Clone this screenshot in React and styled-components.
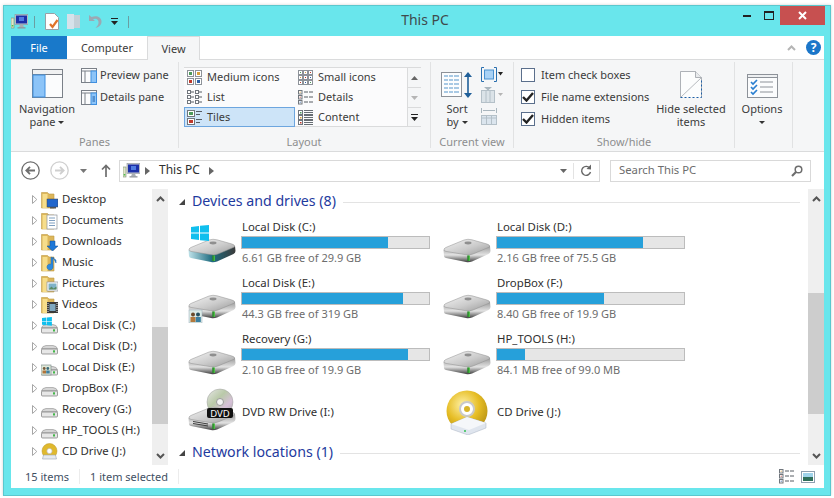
import styled, { createGlobalStyle } from "styled-components";

const GlobalStyle = createGlobalStyle`
  html, body {
    margin: 0;
    background: #ffffff;
    overflow: hidden;
  }
  body {
    font-family: "Noto Sans", "Open Sans", sans-serif;
    font-size: 11px;
    color: #3b3b3b;
  }
  * { box-sizing: border-box; }
  svg { display: block; flex: none; }
`;

const Window = styled.div`
  margin: 5px 3px 0;
  width: 828px;
  height: 491px;
  padding: 0 6px 7px 7px;
  display: flex;
  flex-direction: column;
  background: #69e6ec;
  border: 1px solid #5ac8ce;
  box-shadow: 0 0 3px rgba(0, 0, 0, 0.18);
`;

const TitleBar = styled.div`
  height: 30px;
  flex: none;
  display: grid;
  grid-template-columns: 1fr auto 1fr;
`;

const QuickAccess = styled.div`
  display: flex;
  align-items: center;
  padding-top: 1px;
`;

const QuickSep = styled.span`
  width: 1px;
  height: 12px;
  background: #6a9ea2;
  margin: 0 ${(p) => p.$after || 10}px 0 ${(p) => p.$before || 6}px;
`;

const Title = styled.div`
  font-size: 14px;
  line-height: 28px;
  padding-left: 15px;
  color: #3f4a4c;
`;

const Caption = styled.div`
  display: flex;
  justify-content: flex-end;
  align-items: flex-start;
  margin-right: -1px;
`;

const CaptionButton = styled.div`
  width: ${(p) => p.$w}px;
  height: 19px;
  display: flex;
  align-items: center;
  justify-content: center;
  background: ${(p) => (p.$close ? "#c75050" : "transparent")};
`;

const TabRow = styled.div`
  height: 24px;
  flex: none;
  display: flex;
  background: #ffffff;
  border-bottom: 1px solid #dadbdc;
`;

const Tab = styled.div`
  width: ${(p) => p.$w}px;
  height: ${(p) => (p.$active ? 24 : 23)}px;
  display: flex;
  align-items: center;
  justify-content: center;
  background: ${(p) => (p.$file ? "#1979ca" : p.$active ? "#f5f6f7" : "#ffffff")};
  color: ${(p) => (p.$file ? "#ffffff" : "#3b3b3b")};
  border: ${(p) => (p.$active ? "1px solid #dadbdc" : "none")};
  border-bottom: none;
`;

const TabTools = styled.div`
  margin-left: auto;
  display: flex;
  align-items: center;
  gap: 10px;
  padding-right: 3px;
`;

const Ribbon = styled.div`
  height: 92px;
  flex: none;
  display: flex;
  padding: 2px 0 3px;
  background: #f5f6f7;
  border-bottom: 1px solid #dadbdc;
`;

const Group = styled.div`
  width: ${(p) => p.$w}px;
  flex: none;
  display: flex;
  flex-direction: column;
  border-right: 1px solid #e1e2e3;
`;

const GroupBody = styled.div`
  flex: 1;
  display: flex;
  align-items: flex-start;
  padding-left: ${(p) => p.$left || 0}px;
`;

const GroupLabel = styled.div`
  height: 13px;
  line-height: 13px;
  text-align: center;
  color: #8d8e8f;
  margin-left: ${(p) => p.$shift || 0}px;
`;

const LargeButton = styled.div`
  width: ${(p) => p.$w}px;
  padding-top: 7px;
  margin-left: ${(p) => p.$ml || 0}px;
  display: flex;
  flex-direction: column;
  align-items: center;
  text-align: center;
  white-space: nowrap;
`;

const LargeIcon = styled.div`
  height: 29px;
  margin-bottom: 4px;
  display: flex;
  align-items: flex-end;
`;

const LargeLine = styled.div`
  height: 13px;
  line-height: 13px;
`;

const Caret = styled.span`
  display: inline-block;
  width: 0;
  height: 0;
  margin-left: ${(p) => p.$ml ?? 3}px;
  vertical-align: 2px;
  border-left: 3px solid transparent;
  border-right: 3px solid transparent;
  border-top: 3px solid #333;
`;

const SmallList = styled.div`
  padding-top: 2px;
  margin-left: ${(p) => p.$ml}px;
  width: ${(p) => (p.$w ? `${p.$w}px` : "auto")};
`;

const SmallRow = styled.div`
  height: 22px;
  display: flex;
  align-items: center;
  gap: ${(p) => p.$gap || 3}px;
  white-space: nowrap;
`;

/* Noto sits a pixel low in its line box, this lifts the label without moving the icon beside it */
const RowLabel = styled.span`
  margin-bottom: 2px;
`;

const CheckBox = styled.span`
  width: 14px;
  height: 14px;
  flex: none;
  display: flex;
  align-items: center;
  justify-content: center;
  background: #ffffff;
  border: 1px solid #5b6f8c;
`;

const Gallery = styled.div`
  margin: 5px 0 0 5px;
  width: 237px;
  height: 60px;
  display: grid;
  grid-template-columns: 111px 112px 14px;
  grid-template-rows: repeat(3, 20px);
  grid-auto-flow: column;
  background: #fbfbfc;
  box-shadow: inset 0 1px 0 #dadbdc, inset 0 -1px 0 #dadbdc;
`;

const GalleryItem = styled.div`
  display: flex;
  align-items: center;
  gap: 5px;
  white-space: nowrap;
  background: ${(p) => (p.$selected ? "#cde4f8" : "transparent")};
  border: ${(p) => (p.$selected ? "1px solid #6da6df" : "none")};
  padding-left: ${(p) => (p.$selected ? 2 : 3)}px;
`;

const GalleryStep = styled.div`
  display: flex;
  align-items: center;
  justify-content: center;
  background: #f5f6f7;
  border-left: 1px solid #dadbdc;
  border-top: 1px solid #dadbdc;
  &:last-child { border-bottom: 1px solid #dadbdc; }
`;

const ToolColumn = styled.div`
  display: flex;
  flex-direction: column;
  gap: 5px;
  margin: 5px 0 0 8px;
`;

const AddressRow = styled.div`
  height: 37px;
  flex: none;
  display: flex;
  align-items: center;
  padding: 0 13px 0 10px;
  background: #ffffff;
`;

const NavGap = styled.span`
  width: ${(p) => p.$w}px;
  flex: none;
`;

const AddressBox = styled.div`
  flex: 1;
  height: 22px;
  display: flex;
  align-items: center;
  padding-left: 3px;
  border: 1px solid #d9d9d9;
  color: #2f2f2f;
  font-size: 12px;
`;

const Crumb = styled.span`
  margin: 0 9px 2px;
`;

const AddressEnd = styled.div`
  margin-left: auto;
  height: 100%;
  display: flex;
  align-items: center;
  gap: 6px;
  padding-right: 7px;
`;

const AddressSep = styled.span`
  width: 1px;
  height: 16px;
  background: #e3e3e3;
`;

const SearchBox = styled.div`
  width: 201px;
  height: 22px;
  margin-left: 10px;
  display: flex;
  align-items: center;
  justify-content: space-between;
  padding: 0 7px 0 8px;
  border: 1px solid #d9d9d9;
  color: #6d6d6d;
  font-size: 11.3px;
`;

const Content = styled.div`
  flex: 1;
  min-height: 0;
  display: flex;
  background: #ffffff;
`;

const NavPane = styled.div`
  width: 141px;
  flex: none;
  overflow: hidden;
`;

const TreeRow = styled.div`
  height: 21px;
  display: flex;
  align-items: center;
  gap: 4px;
  padding-left: 21px;
  white-space: nowrap;
  color: #2f2f2f;
  font-size: 11.4px;
`;

const ScrollBar = styled.div`
  width: 16px;
  flex: none;
  display: flex;
  flex-direction: column;
  background: #efefef;
`;

const ScrollEnd = styled.div`
  height: 19px;
  flex: none;
  display: flex;
  align-items: center;
  justify-content: center;
`;

const ScrollTrack = styled.div`
  flex: 1;
  display: flex;
  flex-direction: column;
  justify-content: flex-start;
  padding-top: ${(p) => p.$top}px;
`;

const ScrollThumb = styled.div`
  height: ${(p) => p.$h}px;
  background: #cdcdcd;
`;

const MainPane = styled.div`
  flex: 1;
  min-width: 0;
  margin-left: 2px;
  padding: 0 8px 0 9px;
  overflow: hidden;
`;

const GroupHeader = styled.div`
  height: 24px;
  padding-top: 2px;
  display: flex;
  align-items: center;
`;

const HeaderText = styled.span`
  font-size: 14.2px;
  color: #1e3a9e;
  margin: 0 7px 4px 7px;
  white-space: nowrap;
`;

const HeaderRule = styled.span`
  flex: 1;
  height: 1px;
  background: #e3e3e3;
`;

const TileGrid = styled.div`
  display: grid;
  grid-template-columns: 255px 255px;
  grid-auto-rows: 48px;
  row-gap: 8px;
  margin: 6px 0 5px 9px;
`;

const Tile = styled.div`
  display: flex;
  align-items: ${(p) => (p.$bare ? "center" : "flex-start")};
  gap: 5px;
`;

const TileText = styled.div`
  width: 189px;
  color: #2f2f2f;
`;

const TileName = styled.div`
  padding-left: 1px;
  line-height: 15px;
  font-size: 11.4px;
`;

const UsageBar = styled.div`
  height: 13px;
  margin: 2px 0 1px;
  background: #e6e6e6;
  border: 1px solid #bcbcbc;
`;

const UsageFill = styled.div`
  height: 100%;
  background: #26a0da;
`;

const FreeText = styled.div`
  padding-left: 1px;
  line-height: 15px;
  color: #6d6d6d;
`;

const StatusBar = styled.div`
  height: 23px;
  flex: none;
  display: flex;
  align-items: center;
  padding: 0 9px 0 14px;
  background: #ffffff;
  color: #3f4f63;
`;

const StatusItem = styled.span`
  padding-right: ${(p) => p.$pr}px;
  margin-right: 10px;
  line-height: 15px;
  border-right: 1px solid #ececec;
`;

const StatusViews = styled.div`
  margin-left: auto;
  display: flex;
  align-items: center;
  gap: 7px;
`;

/* ---- drawings ---- */

const Computer = () => (
  <svg width="17" height="15" viewBox="0 0 17 15">
    <rect x="0" y="4" width="3" height="10" fill="#dfe6c8" stroke="#7a8a70" strokeWidth="0.6" />
    <rect x="0.7" y="11" width="1.6" height="1.5" fill="#4fbf4f" />
    <rect x="4" y="0.5" width="13" height="10" fill="#c9ccd1" stroke="#8d9299" strokeWidth="0.6" />
    <rect x="5" y="1.5" width="11" height="8" fill="#1c2fa8" />
    <rect x="8" y="3" width="5" height="4" fill="#4f7be0" />
    <path d="M9 10.5h3l1 3H8z" fill="#a8adb3" />
    <rect x="6.5" y="13.2" width="8" height="1.3" fill="#8f949a" />
  </svg>
);

const NavPaneIcon = ({ w = 31, h = 29, wide = 12 }) => (
  <svg width={w} height={h} viewBox={`0 0 ${w} ${h}`}>
    <rect x="0.5" y="0.5" width={w - 1} height={h - 1} fill="#fbfcfd" stroke="#7a8088" />
    <rect x="0.5" y="0.5" width={w - 1} height="5" fill="#f0f1f2" stroke="#7a8088" />
    <rect x="1" y="6" width={wide} height={h - 7} fill="#8cc4f8" stroke="#3f8fe0" />
  </svg>
);

const SidePane = ({ lines }) => (
  <svg width="16" height="15" viewBox="0 0 16 15">
    <rect x="0.5" y="0.5" width="15" height="14" fill="#fbfcfd" stroke="#7a8088" />
    <path d="M0.5 3h15M4 3v11.5" stroke="#7a8088" fill="none" />
    <rect x="10" y="3" width="5.5" height="11.5" fill="#8cc4f8" stroke="#3f8fe0" />
    {lines && <path d="M11.5 7h2.5M11.5 9h2.5M11.5 11h2.5" stroke="#1f5fa8" />}
  </svg>
);

const swatches = ["#4d9a5b", "#d9a13b", "#c0392b", "#2e5fa8"];

const ViewIcon = ({ kind }) => {
  const dash = "#565c63";
  if (kind === "medium") {
    return (
      <svg width="15" height="15" viewBox="0 0 15 15">
        {[[0, 0], [8, 0], [0, 8], [8, 8]].map(([x, y], i) => (
          <g key={i}>
            <rect x={x + 0.5} y={y + 0.5} width="6" height="6" fill="#fff" stroke="#8d9299" />
            <rect x={x + 2} y={y + 2} width="3" height="3" fill={swatches[i]} />
          </g>
        ))}
      </svg>
    );
  }
  if (kind === "small") {
    const cells = [];
    for (let r = 0; r < 3; r++) for (let c = 0; c < 3; c++) cells.push([c * 5, r * 5, swatches[(r + c) % 4]]);
    return (
      <svg width="15" height="15" viewBox="0 0 15 15">
        {cells.map(([x, y, f], i) => (
          <g key={i}>
            <rect x={x + 0.5} y={y + 0.5} width="4" height="4" fill="#fff" stroke="#8d9299" />
            <rect x={x + 2} y={y + 2} width="1" height="1" fill={f} />
          </g>
        ))}
      </svg>
    );
  }
  if (kind === "list") {
    return (
      <svg width="15" height="15" viewBox="0 0 15 15">
        {[0, 5, 10].map((y) => (
          <g key={y} fill="#fff" stroke="#70767d">
            <rect x="0.5" y={y + 0.5} width="3" height="3" />
            <rect x="8.5" y={y + 0.5} width="3" height="3" />
            <path d={`M4 ${y + 2}h3M12 ${y + 2}h3`} stroke={dash} />
          </g>
        ))}
      </svg>
    );
  }
  if (kind === "details") {
    return (
      <svg width="15" height="15" viewBox="0 0 15 15">
        {[0, 5, 10].map((y, i) => (
          <g key={y} fill="#fff" stroke="#70767d">
            <rect x="0.5" y={y + 0.5} width="3.5" height="3.5" />
            <rect x="1.7" y={y + 1.7} width="1" height="1" fill={swatches[i + 1]} stroke="none" />
            <path d={`M6 ${y + 2}h4M11 ${y + 2}h4`} stroke={dash} />
          </g>
        ))}
      </svg>
    );
  }
  if (kind === "tiles") {
    return (
      <svg width="15" height="15" viewBox="0 0 15 15">
        {[0, 8].map((y, i) => (
          <g key={y}>
            <rect x="0.5" y={y + 0.5} width="7" height="6" fill="#fff" stroke="#70767d" />
            <rect x="2" y={y + 2} width="4" height="3" fill={swatches[i * 2]} />
            <path d={`M9 ${y + 1.5}h6M9 ${y + 4.5}h4`} stroke={dash} />
          </g>
        ))}
      </svg>
    );
  }
  return (
    <svg width="15" height="15" viewBox="0 0 15 15">
      {[0, 5, 10].map((y, i) => (
        <g key={y}>
          <rect x="0.5" y={y + 0.5} width="4" height="4" fill="#fff" stroke="#70767d" />
          <rect x="2" y={y + 2} width="1.5" height="1.5" fill={swatches[i]} />
          <path d={`M6 ${y + 0.5}h9M6 ${y + 2.5}h9M6 ${y + 4.5}h9`} stroke={dash} strokeWidth="0.9" />
        </g>
      ))}
    </svg>
  );
};

const Arrow = ({ dir, color = "#5f6368", w = 9, h = 6 }) => {
  const points = dir === "up" ? `0,${h} ${w / 2},0 ${w},${h}` : `0,0 ${w / 2},${h} ${w},0`;
  return (
    <svg width={w} height={h} viewBox={`0 0 ${w} ${h}`}>
      <polygon points={points} fill={color} />
    </svg>
  );
};

const Chevron = ({ dir, color = "#555" }) => (
  <svg width="9" height="6" viewBox="0 0 9 6">
    <path d={dir === "up" ? "M1 5l3.5-3.5L8 5" : "M1 1l3.5 3.5L8 1"} fill="none" stroke={color} strokeWidth="2" />
  </svg>
);

const CrumbArrow = () => (
  <svg width="5" height="8" viewBox="0 0 5 8">
    <polygon points="0,0 5,4 0,8" fill="#666" />
  </svg>
);

const TreeArrow = () => (
  <svg width="5" height="9" viewBox="0 0 5 9">
    <polygon points="0.5,0.5 4.8,4.5 0.5,8.5" fill="#fff" stroke="#a6a6a6" />
  </svg>
);

const HeaderTriangle = () => (
  <svg width="6" height="6" viewBox="0 0 6 6">
    <polygon points="6,0 6,6 0,6" fill="#444" />
  </svg>
);

const CircleNav = ({ back, enabled }) => {
  const c = enabled ? "#6e6e6e" : "#cfcfcf";
  return (
    <svg width="19" height="19" viewBox="0 0 19 19">
      <circle cx="9.5" cy="9.5" r="8.7" fill="#fff" stroke={c} strokeWidth="1.3" />
      <path
        d={back ? "M14 9.5H5.5M9 5.8L5.3 9.5 9 13.2" : "M5 9.5h8.5M10 5.8l3.7 3.7-3.7 3.7"}
        fill="none"
        stroke={c}
        strokeWidth="1.8"
      />
    </svg>
  );
};

const overlays = {
  desktop: (
    <>
      <rect x="6" y="8" width="11" height="8" fill="#2266cc" stroke="#444" strokeWidth="0.5" />
      <rect x="9" y="16" width="6" height="1.5" fill="#555" />
    </>
  ),
  documents: (
    <>
      <rect x="6" y="3" width="10" height="14" fill="#fff" stroke="#8d9299" strokeWidth="0.7" />
      <path d="M8 6h6M8 8.5h6M8 11h6M8 13.5h6" stroke="#7f9fc0" />
    </>
  ),
  downloads: <path d="M9 8h5v5h3l-5.5 5L6 13h3z" fill="#1e78d8" stroke="#0e4c99" strokeWidth="0.5" />,
  music: (
    <path d="M12 3v10a3 3 0 1 1-2-2.8V3l5 3v3z" fill="#2c8ae0" stroke="#1460b0" strokeWidth="0.5" />
  ),
  pictures: (
    <>
      <rect x="6" y="7" width="11" height="9" fill="#fff" stroke="#8d9299" strokeWidth="0.7" />
      <rect x="7.5" y="8.5" width="8" height="6" fill="#7fb2c8" />
      <path d="M7.5 14.5l3-3 2 2 3-2v3z" fill="#5a8a64" />
    </>
  ),
  videos: (
    <>
      <rect x="6" y="6" width="11" height="11" fill="#3a3a3a" />
      <rect x="8.5" y="8" width="6" height="7" fill="#7fa8c0" />
      <path d="M7 7v9M16 7v9" stroke="#ddd" strokeDasharray="1 1" />
    </>
  ),
};

const FolderIcon = ({ kind }) => (
  <svg width="17" height="18" viewBox="0 0 17 18">
    <path d="M0.5 1.5h6l1.5 1.5h5v14h-12.5z" fill="#dcb65a" stroke="#c19c45" strokeWidth="0.6" />
    <rect x="1.5" y="3" width="5" height="14" fill="#f6dd8b" />
    {overlays[kind]}
  </svg>
);

const WindowsLogo = ({ x, y, s }) => (
  <g transform={`translate(${x} ${y}) scale(${s})`} fill="#10bfee">
    <polygon points="0,2 8,1 8,7.6 0,7.6" />
    <polygon points="9,0.8 18,0 18,7.6 9,7.6" />
    <polygon points="0,8.6 8,8.6 8,15 0,14" />
    <polygon points="9,8.6 18,8.6 18,16 9,15.2" />
  </g>
);

const SmallDrive = ({ logo, share }) => (
  <svg width="17" height="18" viewBox="0 0 17 18">
    <path d="M0.5 11 Q1 8 5 7.5h7 Q16 8 16.5 11z" fill="#d5d5d5" stroke="#8f8f8f" strokeWidth="0.6" />
    <rect x="0.5" y="11" width="16" height="5" rx="1" fill="#e7e7e7" stroke="#777" strokeWidth="0.7" />
    <rect x="12" y="12.3" width="2" height="2.2" fill="#43b649" />
    {logo && <WindowsLogo x={1} y={0} s={0.55} />}
    {share && (
      <>
        <rect x="0" y="6" width="10" height="10" fill="#dfe8d8" stroke="#7f8f8f" strokeWidth="0.7" />
        <circle cx="3.2" cy="9.5" r="1.4" fill="#7a5a3a" />
        <circle cx="6.8" cy="9.5" r="1.4" fill="#3a6a7a" />
        <rect x="1.5" y="11.5" width="3.5" height="3" fill="#b0743a" />
        <rect x="5.2" y="11.5" width="3.5" height="3" fill="#3f7f9f" />
      </>
    )}
  </svg>
);

const CdSmall = () => (
  <svg width="17" height="18" viewBox="0 0 17 18">
    <circle cx="8.5" cy="8" r="7.5" fill="#e0b92e" stroke="#b89420" strokeWidth="0.5" />
    <circle cx="8.5" cy="8" r="2.6" fill="#fff" stroke="#bbb" strokeWidth="0.7" />
    <path d="M2.5 12h12l1 4h-14z" fill="#e6eaf0" stroke="#9aa5b4" strokeWidth="0.6" />
  </svg>
);

const DriveBody = ({ dvd, dark }) => (
  <g transform="translate(0 20)">
    <path
      d="M0.5 11 L1 17 Q1 18.5 3 19 L23 23 Q26 23.6 29 22.5 L45.5 15 Q47.5 14 47.5 12 L47 7z"
      fill={`url(#${dark ? "driveFrontC" : "driveFront"})`}
    />
    <path
      d="M1 10 Q1.5 9 4 8 L21 1 Q25 -0.4 29 0.8 L44 5 Q47.5 6 46.5 8 L30 15 Q26.5 16.5 22 15.6 L3 12.4 Q0.5 12 1 10z"
      fill="url(#driveTop)"
      stroke="#8e8e8e"
      strokeWidth="0.5"
    />
    <ellipse cx="25" cy="4" rx="3.5" ry="1.4" fill="#8f8f8f" />
    {dvd && <path d="M5 14.5L20 17M5 16.5L20 19" stroke="#3d3d3d" strokeWidth="1" />}
    <rect x="24.5" y="16.5" width="2.4" height="5.5" fill="#47c43f" />
    <rect x="24.5" y="16.5" width="1" height="5.5" fill="#1e6a24" />
  </g>
);

const DriveDefs = () => (
  <defs>
    <linearGradient id="driveTop" x1="0" y1="0" x2="1" y2="1">
      <stop offset="0" stopColor="#f4f4f4" />
      <stop offset="0.55" stopColor="#cbcbcb" />
      <stop offset="1" stopColor="#9a9a9a" />
    </linearGradient>
    <linearGradient id="driveFront" x1="0" y1="0" x2="0" y2="1">
      <stop offset="0" stopColor="#9a9a9a" />
      <stop offset="0.55" stopColor="#e2e2e2" />
      <stop offset="1" stopColor="#3f3f3f" />
    </linearGradient>
    <linearGradient id="driveFrontC" x1="0" y1="0" x2="1" y2="0">
      <stop offset="0" stopColor="#bfe3ea" />
      <stop offset="0.5" stopColor="#1f6c80" />
      <stop offset="1" stopColor="#3a3a3a" />
    </linearGradient>
    <radialGradient id="discGold" cx="0.4" cy="0.35" r="0.8">
      <stop offset="0" stopColor="#fff2a8" />
      <stop offset="0.5" stopColor="#e6bd25" />
      <stop offset="1" stopColor="#a88410" />
    </radialGradient>
    <linearGradient id="discSilver" x1="0" y1="0" x2="1" y2="1">
      <stop offset="0" stopColor="#e8e8e8" />
      <stop offset="0.4" stopColor="#b9c9a8" />
      <stop offset="0.7" stopColor="#d6c0d8" />
      <stop offset="1" stopColor="#a9a9a9" />
    </linearGradient>
  </defs>
);

const DriveIcon = ({ kind }) => (
  <svg width="48" height="48" viewBox="0 0 48 48">
    <DriveDefs />
    {kind === "cd" ? (
      <>
        <circle cx="24" cy="24" r="20.5" fill="url(#discGold)" />
        <circle cx="24" cy="22" r="7" fill="#ffffff" stroke="#c9c9c9" strokeWidth="2" />
        <circle cx="24" cy="22" r="3" fill="#d8b52a" />
        <path d="M8 37 L24 30 L43 36 L43 41 L25 48 L8 42z" fill="#dfe5ee" stroke="#a9b3c2" strokeWidth="0.5" />
        <path d="M8 37 L24 30 L43 36 L26 43z" fill="#f5f7fa" />
        <circle cx="22" cy="44" r="1" fill="#2fbf4f" />
      </>
    ) : (
      <>
        {kind === "dvd" && (
          <>
            <circle cx="32" cy="15" r="13" fill="url(#discSilver)" stroke="#a0a0a0" strokeWidth="0.5" />
            <circle cx="32" cy="15" r="3.5" fill="#f3f3f3" stroke="#999" />
          </>
        )}
        <DriveBody dvd={kind === "dvd"} dark={kind === "windows"} />
        {kind === "windows" && <WindowsLogo x={3} y={6} s={1} />}
        {kind === "dvd" && (
          <>
            <rect x="19" y="21" width="26" height="10" rx="2" fill="#111" />
            <text x="32" y="29.5" textAnchor="middle" fontSize="9.5" fill="#fff" fontFamily="Noto Sans, sans-serif">
              DVD
            </text>
          </>
        )}
        {kind === "share" && (
          <>
            <rect x="1" y="35" width="13" height="13" fill="#dcebe6" stroke="#9ab" strokeWidth="0.5" />
            <circle cx="5" cy="39.5" r="2" fill="#6a4a2a" />
            <circle cx="10" cy="39.5" r="2" fill="#24505f" />
            <rect x="2.5" y="42" width="5" height="5" fill="#b2793d" />
            <rect x="7.8" y="42" width="5" height="5" fill="#3a7f9f" />
          </>
        )}
      </>
    )}
  </svg>
);

const DocCheckIcon = () => (
  <svg width="15" height="17" viewBox="0 0 15 17">
    <path d="M0.5 0.5h9l4 4v12h-13z" fill="#fff" stroke="#9aa0a6" />
    <path d="M5 11l2.5 3 5-7" fill="none" stroke="#e0742a" strokeWidth="2.2" />
  </svg>
);

const PanesFaded = () => (
  <svg width="13" height="15" viewBox="0 0 13 15">
    <rect x="0" y="0" width="7" height="15" fill="#d6e2ea" />
    <rect x="7" y="1" width="6" height="13" fill="#c3d0d8" />
  </svg>
);

const UndoIcon = () => (
  <svg width="14" height="15" viewBox="0 0 14 15">
    <path d="M1 1v6h6L5 5.2C8 3.6 11 5.5 10.5 9 10.2 11 9 12.5 7.5 14 11.5 13 13.8 10.5 13.5 7 13 2.5 8 1 3.5 3z" fill="#9ba9b3" />
  </svg>
);

const DropLine = () => (
  <svg width="7" height="7" viewBox="0 0 7 7">
    <rect x="0" y="0" width="7" height="1" fill="#222" />
    <polygon points="0,3 7,3 3.5,7" fill="#222" />
  </svg>
);

const SortIcon = () => (
  <svg width="32" height="27" viewBox="0 0 32 27">
    <rect x="0.5" y="1.5" width="20" height="24" fill="#fcfdfe" stroke="#8d9299" />
    {[5, 9, 13, 17, 21].map((y) => (
      <path key={y} d={`M3 ${y}h4M8 ${y}h4M13 ${y}h5`} stroke="#8cb8dc" strokeWidth="1.4" />
    ))}
    <path d="M27 3v21" stroke="#1f5f99" strokeWidth="1.6" />
    <polygon points="23,6 27,1 31,6" fill="#1f5f99" />
    <polygon points="23,22 27,27 31,22" fill="#1f5f99" />
  </svg>
);

const GroupByIcon = () => (
  <svg width="22" height="15" viewBox="0 0 22 15">
    <path d="M3 0.5H0.5v14H3M13 0.5h2.5v14H13" fill="none" stroke="#2a6fae" />
    <rect x="3.5" y="3" width="9" height="9" fill="#a9d2f5" stroke="#4b92d0" />
    <polygon points="17,5 22,5 19.5,8.5" fill="#222" />
  </svg>
);

const AddColumnsIcon = () => (
  <svg width="22" height="16" viewBox="0 0 22 16">
    <rect x="0.5" y="3.5" width="13" height="12" fill="#dbe3e8" stroke="#b4c0c8" />
    <path d="M5 3.5v12M9 3.5v12" stroke="#b4c0c8" />
    <polygon points="3,0 11,0 7,3.5" fill="#a9b6be" />
    <polygon points="17,6 22,6 19.5,9" fill="#b5b5b5" />
  </svg>
);

const FitColumnsIcon = () => (
  <svg width="16" height="17" viewBox="0 0 16 17">
    <path d="M0.5 0v5M15.5 0v5M2 2.5h12" stroke="#a9b6be" />
    <rect x="0.5" y="7.5" width="15" height="9" fill="#dbe5ee" stroke="#b4c0c8" />
    <path d="M0.5 10h15M5.5 7.5v9M10.5 7.5v9" stroke="#b4c0c8" />
  </svg>
);

const HideIcon = () => (
  <svg width="22" height="27" viewBox="0 0 22 27">
    <path d="M0.5 26.5V0.5h15l6 6v20" fill="#fcfdfd" stroke="#9aa0a6" strokeWidth="0.8" />
    <path d="M15.5 0.5v6h6" fill="#e8eaec" stroke="#9aa0a6" strokeWidth="0.8" />
    <path d="M1 26L21 7" stroke="#b7bbbf" />
    <path d="M0.5 26.5h21V8" fill="none" stroke="#1d5fa6" strokeDasharray="2 2" />
  </svg>
);

const OptionsIcon = () => (
  <svg width="31" height="24" viewBox="0 0 31 24">
    <rect x="0.5" y="0.5" width="30" height="23" fill="#fbfcfd" stroke="#8d9299" />
    <rect x="0.5" y="0.5" width="30" height="3" fill="#eef0f2" stroke="#8d9299" />
    {[6, 11, 16].map((y) => (
      <g key={y}>
        <path d={`M4 ${y + 2}l2 2 4-4`} fill="none" stroke="#2a7fd0" strokeWidth="1.7" />
        <path d={`M13 ${y + 2}h13`} stroke="#8d9299" />
      </g>
    ))}
  </svg>
);

const CheckMark = () => (
  <svg width="12" height="10" viewBox="0 0 12 10">
    <path d="M1 5l3.5 3.5L11 1" fill="none" stroke="#222" strokeWidth="2.4" />
  </svg>
);

const RefreshIcon = () => (
  <svg width="12" height="13" viewBox="0 0 12 13">
    <path d="M10 4.5A4.5 4.5 0 1 0 10.5 8" fill="none" stroke="#666" strokeWidth="1.4" />
    <polygon points="11,0.5 11,5.5 6.5,5" fill="#666" />
  </svg>
);

const SearchIcon = () => (
  <svg width="12" height="12" viewBox="0 0 12 12">
    <circle cx="7.5" cy="4.5" r="3.3" fill="none" stroke="#6d6d6d" strokeWidth="1.5" />
    <path d="M5 7L1 11" stroke="#6d6d6d" strokeWidth="2.2" />
  </svg>
);

const UpArrow = () => (
  <svg width="10" height="13" viewBox="0 0 10 13">
    <path d="M5 13V2M1 5.5L5 1.5l4 4" fill="none" stroke="#6e6e6e" strokeWidth="1.7" />
  </svg>
);

const HelpIcon = () => (
  <svg width="15" height="15" viewBox="0 0 15 15">
    <circle cx="7.5" cy="7.5" r="7.5" fill="#1b76c9" />
    <text x="7.5" y="12" textAnchor="middle" fontSize="12" fontWeight="700" fill="#fff" fontFamily="Noto Sans, sans-serif">
      ?
    </text>
  </svg>
);

const LargeThumbView = () => (
  <svg width="14" height="12" viewBox="0 0 14 12">
    <rect x="0.5" y="0.5" width="13" height="11" fill="#fff" stroke="#8fa0b0" />
    <rect x="2" y="2" width="10" height="4" fill="#9fd3ea" />
    <rect x="2" y="6" width="10" height="4" fill="#2f6f5a" />
  </svg>
);

/* ---- data ---- */

const folders = [
  ["Desktop", "desktop"],
  ["Documents", "documents"],
  ["Downloads", "downloads"],
  ["Music", "music"],
  ["Pictures", "pictures"],
  ["Videos", "videos"],
];

const treeDrives = [
  ["Local Disk (C:)", <SmallDrive logo />],
  ["Local Disk (D:)", <SmallDrive />],
  ["Local Disk (E:)", <SmallDrive share />],
  ["DropBox (F:)", <SmallDrive />],
  ["Recovery (G:)", <SmallDrive />],
  ["HP_TOOLS (H:)", <SmallDrive />],
  ["CD Drive (J:)", <CdSmall />],
];

const drives = [
  { name: "Local Disk (C:)", free: "6.61 GB free of 29.9 GB", used: 78, kind: "windows" },
  { name: "Local Disk (D:)", free: "2.16 GB free of 75.5 GB", used: 78, kind: "plain" },
  { name: "Local Disk (E:)", free: "44.3 GB free of 319 GB", used: 86, kind: "share" },
  { name: "DropBox (F:)", free: "8.40 GB free of 19.9 GB", used: 57, kind: "plain" },
  { name: "Recovery (G:)", free: "2.10 GB free of 19.9 GB", used: 89, kind: "plain" },
  { name: "HP_TOOLS (H:)", free: "84.1 MB free of 99.0 MB", used: 15, kind: "plain" },
  { name: "DVD RW Drive (I:)", kind: "dvd" },
  { name: "CD Drive (J:)", kind: "cd" },
];

const layouts = [
  ["Medium icons", "medium"],
  ["List", "list"],
  ["Tiles", "tiles", true],
  ["Small icons", "small"],
  ["Details", "details"],
  ["Content", "content"],
];

export default function App() {
  return (
    <>
      <GlobalStyle />
      <Window>
        <TitleBar>
          <QuickAccess>
            <Computer />
            <QuickSep />
            <DocCheckIcon />
            <NavGap $w={7} />
            <PanesFaded />
            <NavGap $w={8} />
            <UndoIcon />
            <NavGap $w={9} />
            <DropLine />
            <QuickSep $before={10} />
          </QuickAccess>
          <Title>This PC</Title>
          <Caption>
            <CaptionButton $w={22}>
              <svg width="8" height="2" viewBox="0 0 8 2">
                <rect width="8" height="2" fill="#222" />
              </svg>
            </CaptionButton>
            <CaptionButton $w={22}>
              <svg width="10" height="9" viewBox="0 0 10 9">
                <rect x="0.5" y="0.5" width="9" height="8" fill="none" stroke="#222" />
                <rect x="0.5" y="0.5" width="9" height="1.5" fill="#222" />
              </svg>
            </CaptionButton>
            <CaptionButton $w={45} $close>
              <svg width="9" height="9" viewBox="0 0 9 9">
                <path d="M1 1l7 7M8 1l-7 7" stroke="#fff" strokeWidth="2" />
              </svg>
            </CaptionButton>
          </Caption>
        </TitleBar>

        <TabRow>
          <Tab $w={56} $file>File</Tab>
          <Tab $w={80}>Computer</Tab>
          <Tab $w={53} $active>View</Tab>
          <TabTools>
            <Chevron dir="up" color="#b5b5b5" />
            <HelpIcon />
          </TabTools>
        </TabRow>

        <Ribbon>
          <Group $w={168}>
            <GroupBody $left={8}>
              <LargeButton $w={56}>
                <LargeIcon>
                  <NavPaneIcon />
                </LargeIcon>
                <LargeLine>Navigation</LargeLine>
                <LargeLine>pane<Caret /></LargeLine>
              </LargeButton>
              <SmallList $ml={6}>
                <SmallRow><SidePane /><RowLabel>Preview pane</RowLabel></SmallRow>
                <SmallRow><SidePane lines /><RowLabel>Details pane</RowLabel></SmallRow>
              </SmallList>
            </GroupBody>
            <GroupLabel>Panes</GroupLabel>
          </Group>

          <Group $w={252}>
            <GroupBody>
              <Gallery>
                {layouts.map(([label, kind, selected]) => (
                  <GalleryItem key={label} $selected={selected}>
                    <ViewIcon kind={kind} />
                    <RowLabel>{label}</RowLabel>
                  </GalleryItem>
                ))}
                <GalleryStep><Arrow dir="up" color="#666" w={7} h={4} /></GalleryStep>
                <GalleryStep><Arrow dir="down" color="#b5b5b5" w={7} h={4} /></GalleryStep>
                <GalleryStep><DropLine /></GalleryStep>
              </Gallery>
            </GroupBody>
            <GroupLabel $shift={-1}>Layout</GroupLabel>
          </Group>

          <Group $w={83}>
            <GroupBody>
              <LargeButton $w={32} $ml={10}>
                <LargeIcon>
                  <SortIcon />
                </LargeIcon>
                <LargeLine>Sort</LargeLine>
                <LargeLine>by<Caret /></LargeLine>
              </LargeButton>
              <ToolColumn>
                <GroupByIcon />
                <AddColumnsIcon />
                <FitColumnsIcon />
              </ToolColumn>
            </GroupBody>
            <GroupLabel>Current view</GroupLabel>
          </Group>

          <Group $w={221}>
            <GroupBody $left={7}>
              <SmallList $ml={0} $w={130}>
                <SmallRow $gap={6}><CheckBox /><RowLabel>Item check boxes</RowLabel></SmallRow>
                <SmallRow $gap={6}><CheckBox><CheckMark /></CheckBox><RowLabel>File name extensions</RowLabel></SmallRow>
                <SmallRow $gap={6}><CheckBox><CheckMark /></CheckBox><RowLabel>Hidden items</RowLabel></SmallRow>
              </SmallList>
              <LargeButton $w={80}>
                <LargeIcon>
                  <HideIcon />
                </LargeIcon>
                <LargeLine>Hide selected</LargeLine>
                <LargeLine>items</LargeLine>
              </LargeButton>
            </GroupBody>
            <GroupLabel>Show/hide</GroupLabel>
          </Group>

          <Group $w={58}>
            <GroupBody $left={5}>
              <LargeButton $w={44}>
                <LargeIcon>
                  <OptionsIcon />
                </LargeIcon>
                <LargeLine>Options</LargeLine>
                <LargeLine><Caret $ml={0} /></LargeLine>
              </LargeButton>
            </GroupBody>
            <GroupLabel>&nbsp;</GroupLabel>
          </Group>
        </Ribbon>

        <AddressRow>
          <CircleNav back enabled />
          <NavGap $w={10} />
          <CircleNav />
          <NavGap $w={11} />
          <Arrow dir="down" color="#777" w={7} h={4} />
          <NavGap $w={14} />
          <UpArrow />
          <NavGap $w={8} />
          <AddressBox>
            <Computer />
            <NavGap $w={5} />
            <CrumbArrow />
            <Crumb>This PC</Crumb>
            <CrumbArrow />
            <AddressEnd>
              <Arrow dir="down" color="#666" w={7} h={4} />
              <AddressSep />
              <RefreshIcon />
            </AddressEnd>
          </AddressBox>
          <SearchBox>
            <RowLabel>Search This PC</RowLabel>
            <SearchIcon />
          </SearchBox>
        </AddressRow>

        <Content>
          <NavPane>
            {folders.map(([label, kind]) => (
              <TreeRow key={label}>
                <TreeArrow />
                <FolderIcon kind={kind} />
                <RowLabel>{label}</RowLabel>
              </TreeRow>
            ))}
            {treeDrives.map(([label, icon]) => (
              <TreeRow key={label}>
                <TreeArrow />
                {icon}
                <RowLabel>{label}</RowLabel>
              </TreeRow>
            ))}
          </NavPane>
          <ScrollBar>
            <ScrollEnd><Chevron dir="up" /></ScrollEnd>
            <ScrollTrack $top={119}><ScrollThumb $h={97} /></ScrollTrack>
            <ScrollEnd><Chevron dir="down" /></ScrollEnd>
          </ScrollBar>
          <MainPane>
            <GroupHeader>
              <HeaderTriangle />
              <HeaderText>Devices and drives (8)</HeaderText>
              <HeaderRule />
            </GroupHeader>
            <TileGrid>
              {drives.map((d) => (
                <Tile key={d.name} $bare={!d.free}>
                  <DriveIcon kind={d.kind} />
                  <TileText>
                    <TileName>{d.name}</TileName>
                    {d.free && (
                      <>
                        <UsageBar>
                          <UsageFill style={{ width: `${d.used}%` }} />
                        </UsageBar>
                        <FreeText>{d.free}</FreeText>
                      </>
                    )}
                  </TileText>
                </Tile>
              ))}
            </TileGrid>
            <GroupHeader>
              <HeaderTriangle />
              <HeaderText>Network locations (1)</HeaderText>
              <HeaderRule />
            </GroupHeader>
          </MainPane>
          <ScrollBar>
            <ScrollEnd><Chevron dir="up" /></ScrollEnd>
            <ScrollTrack $top={85}><ScrollThumb $h={121} /></ScrollTrack>
            <ScrollEnd><Chevron dir="down" /></ScrollEnd>
          </ScrollBar>
        </Content>

        <StatusBar>
          <StatusItem $pr={10}>15 items</StatusItem>
          <StatusItem $pr={10}>1 item selected</StatusItem>
          <StatusViews>
            <ViewIcon kind="details" />
            <LargeThumbView />
          </StatusViews>
        </StatusBar>
      </Window>
    </>
  );
}
